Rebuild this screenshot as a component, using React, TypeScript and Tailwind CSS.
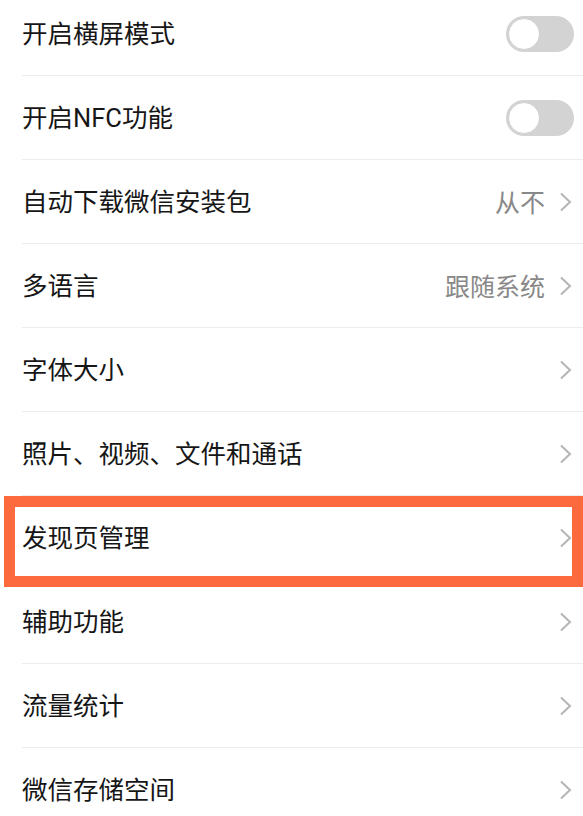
import React from "react";

type Row = { label: string; type: "toggle" | "link"; value?: string; highlight?: boolean };

const rows: Row[] = [
  { label: "开启横屏模式", type: "toggle" },
  { label: "开启NFC功能", type: "toggle" },
  { label: "自动下载微信安装包", type: "link", value: "从不" },
  { label: "多语言", type: "link", value: "跟随系统" },
  { label: "字体大小", type: "link" },
  { label: "照片、视频、文件和通话", type: "link" },
  { label: "发现页管理", type: "link", highlight: true },
  { label: "辅助功能", type: "link" },
  { label: "流量统计", type: "link" },
  { label: "微信存储空间", type: "link" },
];

function Chevron() {
  return (
    <svg width="13" height="20" viewBox="0 0 13 20" className="shrink-0">
      <polyline points="2,1.5 11,10 2,18.5" fill="none" stroke="#b4b4b4" strokeWidth="2" strokeLinejoin="miter" />
    </svg>
  );
}

function Toggle() {
  return (
    <div className="w-[68px] h-[36px] rounded-full bg-[#d3d3d3] p-[2px] flex items-center">
      <div className="w-[32px] h-[32px] rounded-full bg-white border border-[#cfcfcf]" />
    </div>
  );
}

export default function App() {
  return (
    <div
      className="w-[583px] h-[816px] overflow-hidden bg-white"
      style={{ fontFamily: 'Roboto, "Noto Sans CJK SC", sans-serif' }}
    >
      <div className="-mt-[8px]">
        {rows.map((r) => (
          <div key={r.label} className="relative h-[84px] pl-[22px]">
            <div className="h-full flex items-center border-b border-[#ececec]">
              <span className="flex-1 text-[25.5px] text-[#161616] leading-none pt-[3px]">{r.label}</span>
              {r.type === "toggle" ? (
                <div className="pr-[9px]">
                  <Toggle />
                </div>
              ) : (
                <div className="flex items-center gap-[14px] pr-[11px]">
                  {r.value && <span className="text-[25px] text-[#888888] leading-none pt-[3px]">{r.value}</span>}
                  <Chevron />
                </div>
              )}
            </div>
            {r.highlight && (
              <div className="absolute left-[4px] right-0 top-0 h-[91px] border-[11px] border-[#fd6a3e]" />
            )}
          </div>
        ))}
      </div>
    </div>
  );
}
